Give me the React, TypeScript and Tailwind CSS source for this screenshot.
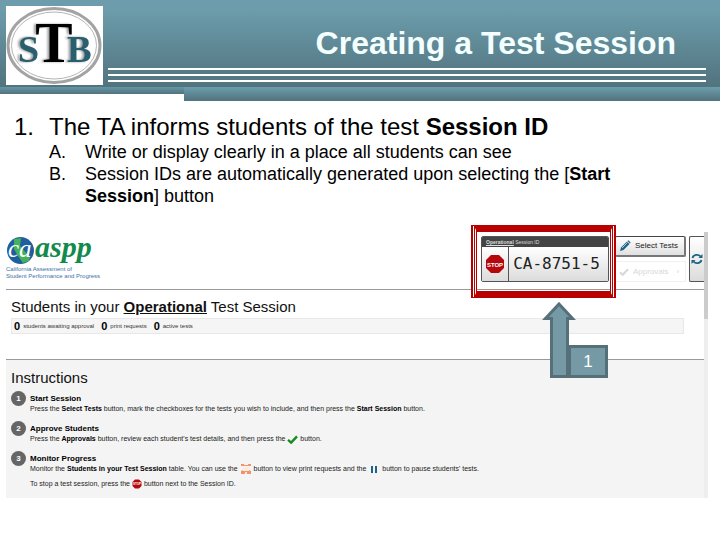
import type { ReactNode } from "react";

function StbLogo() {
  return (
    <svg viewBox="0 0 97 79" className="block h-[79px] w-[97px] bg-white" role="img" aria-label="STB">
      <ellipse cx="48" cy="39.500" rx="46" ry="37" fill="#fff" stroke="#a3a3a3" strokeWidth="3" />
      <ellipse cx="48" cy="39.500" rx="42.500" ry="33.500" fill="none" stroke="#b5b5b5" strokeWidth="1" />
      <g className="drop-shadow-[-2px_0_1px_#999]" fontFamily="'Liberation Serif', serif" fontWeight="bold">
        <text x="12" y="56" fontSize="38" fill="#28606f">S</text>
        <text x="61" y="56" fontSize="37" fill="#28606f">B</text>
        <text x="48" y="56" fontSize="56" textAnchor="middle" fill="#000">T</text>
      </g>
    </svg>
  );
}

function CaasppLogo() {
  return (
    <svg viewBox="0 0 90 44" className="block h-[44px] w-[90px] overflow-visible" role="img" aria-label="caaspp">
      <circle cx="14.500" cy="14.500" r="13.500" fill="#1f5fa0" />
      <path d="M8 3 L15 2 L14 10 L24 21 L23 25 L17 27 L12 20 L8 13 Z" fill="#45b15a" />
      <g fontFamily="'Liberation Serif', serif" fontStyle="italic">
        <text x="2" y="21" fontSize="25" fill="#fff">ca</text>
        <text x="29" y="21" fontSize="30" fill="#128a4c" fontWeight="bold">aspp</text>
      </g>
      <g fontFamily="'Liberation Sans', sans-serif" fontSize="6" fill="#3b73a8">
        <text x="0" y="35">California Assessment of</text>
        <text x="0" y="42">Student Performance and Progress</text>
      </g>
    </svg>
  );
}

function StopIcon({ className }: { className: string }) {
  return (
    <svg viewBox="0 0 20 20" className={className} role="img" aria-label="Stop">
      <path d="M6 1h8l5 5v8l-5 5H6l-5-5V6z" fill="#b5080c" />
      <text x="10" y="12.500" textAnchor="middle" fontFamily="'Liberation Sans', sans-serif" fontWeight="bold" fontSize="6" fill="#fff">STOP</text>
    </svg>
  );
}

function PencilIcon() {
  return (
    <svg viewBox="0 0 12 12" className="h-3 w-3 shrink-0" aria-hidden="true">
      <path d="M1 11 L2 7.500 L8 1.500 L10.500 4 L4.500 10 Z" fill="#1d6483" />
      <path d="M3 8 L8.500 2.500" stroke="#a8cfdf" strokeWidth="1" />
      <path d="M8.500 1 L9.500 0.300 L11.600 2.400 L11 3.500Z" fill="#1d6483" />
    </svg>
  );
}

function RefreshIcon() {
  return (
    <svg viewBox="0 0 12 12" className="h-3 w-3 shrink-0" fill="none" stroke="#1d6483" strokeWidth="1.800" aria-hidden="true">
      <path d="M1.500 5 A4.500 4 0 0 1 9.500 3.500" />
      <path d="M10.500 7 A4.500 4 0 0 1 2.500 8.500" />
      <path d="M11.500 1 V5 H7.500 Z M0.500 11 V7 H4.500 Z" fill="#1d6483" stroke="none" />
    </svg>
  );
}

function CheckIcon({ className }: { className: string }) {
  return (
    <svg viewBox="0 0 12 10" className={className} aria-hidden="true">
      <path d="M1 5.500 L4.500 8.500 L11 1.500" fill="none" stroke="currentColor" strokeWidth="2.600" />
    </svg>
  );
}

function PrintIcon() {
  return (
    <svg viewBox="0 0 10 10" className="mx-px inline-block h-[10px] w-[10px] align-middle" role="img" aria-label="print">
      <path d="M0 0h3v2H0z M7 0h3v2H7z M3 1h4v1H3z M0 7l2-1h6l2 1v3H0z" fill="#f0946a" />
      <path d="M2 3h6v4H2z M4 8h2v2H4z" fill="#fde9df" />
    </svg>
  );
}

function PauseIcon() {
  return (
    <svg viewBox="0 0 6 7" className="mx-[3px] inline-block h-[7px] w-[6px] align-middle" role="img" aria-label="pause">
      <path d="M0 0h2v7H0z M4 0h2v7H4z" fill="#1d6483" />
    </svg>
  );
}

function Step({ n, title, children }: { n: number; title: string; children: ReactNode }) {
  return (
    <li className="flex min-h-[30px] gap-1">
      <span className="flex h-[15px] w-[15px] shrink-0 items-center justify-center rounded-full bg-[#666] text-[8px] font-bold text-white">{n}</span>
      <div className="pt-[3px]">
        <h3 className="text-[8px] leading-[10px] font-bold text-black">{title}</h3>
        {children}
      </div>
    </li>
  );
}

function Callout() {
  return (
    <div className="absolute top-[70px] right-[96px] flex items-end">
      <svg viewBox="0 0 34 76" className="-mr-2 h-[76px] w-[34px]" aria-hidden="true">
        <path d="M17 2 L30.500 16.500 H25.500 V74.500 H9.500 V16.500 H3.500 Z" fill="#759aa6" stroke="#557079" strokeWidth="3" />
      </svg>
      <div className="flex h-[33px] w-[40px] items-center justify-center border-3 border-[#557079] bg-[#759aa6] text-[17px] text-white">1</div>
    </div>
  );
}

function SessionBox() {
  return (
    <div className="relative w-[128px] self-start">
      <div className="overflow-hidden rounded-xs border border-[#555]">
        <div className="h-[10px] bg-[#444] pl-1 text-[5px] leading-[10px] text-[#ddd]">
          <b className="underline">Operational</b> Session ID
        </div>
        <div className="flex h-[34px] bg-linear-to-b from-white to-[#dcdcdc]">
          <button type="button" aria-label="Stop session" className="flex w-[27px] items-center justify-center border-r border-[#555]">
            <StopIcon className="h-5 w-5" />
          </button>
          <output className="flex flex-1 items-center justify-center pr-1 font-['DejaVu_Sans_Mono',monospace] text-[16px] text-[#222]">CA-8751-5</output>
        </div>
      </div>
      <div className="absolute -top-[11px] -right-[7px] -bottom-[16px] -left-[10px] flex border-x-2 border-y-1 border-[#b80000]">
        <div className="flex-1 border-x border-y-0 border-white">
          <div className="h-full border-x border-y-2 border-[#b80000]">
            <div className="h-full border-x border-x-white border-y-2 border-y-[#b80000]">
              <div className="h-full border-x border-y-2 border-[#b80000]" />
            </div>
          </div>
        </div>
      </div>
    </div>
  );
}

export default function App() {
  return (
    <main className="bg-white font-['Liberation_Sans',Arial,sans-serif] text-black">
      <header>
        <div className="flex h-[87px] gap-[5px] bg-linear-to-b from-[#6d9dac] from-10% to-[#51737e] pt-[6px] pl-[6px]">
          <StbLogo />
          <div className="flex flex-1 flex-col">
            <h1 className="h-[62px] pt-[19px] pr-[44px] text-right text-[32px] leading-[36px] font-bold text-[#f4ffff]">Creating a Test Session</h1>
            <div className="mr-[14px] flex flex-col gap-1">
              <div className="h-[2px] bg-white" />
              <div className="h-[2px] bg-white" />
              <div className="h-[2px] bg-white" />
            </div>
          </div>
        </div>
        <div className="flex">
          <div className="h-[7px] w-[184px] bg-linear-to-b from-[#6596a4] to-[#51737e]" />
          <div className="h-[14px] flex-1 bg-linear-to-b from-[#6d9dac] to-[#51737e]" />
        </div>
      </header>

      <ol className="pt-[12px]">
        <li>
          <div className="flex text-[24px] leading-[28px]">
            <span className="w-[49px] pl-[14px]">1.</span>
            <p>The TA informs students of the test <b>Session ID</b></p>
          </div>
          <ol className="pl-[49px] text-[18px] leading-[22px]">
            <li className="flex">
              <span className="w-[36px] shrink-0">A.</span>
              <p>Write or display clearly in a place all students can see</p>
            </li>
            <li className="flex">
              <span className="w-[36px] shrink-0">B.</span>
              <p className="max-w-[550px]">Session IDs are automatically generated upon selecting the [<b>Start Session</b>] button</p>
            </li>
          </ol>
        </li>
      </ol>

      <section className="mt-[25px] mr-[12px] ml-[6px] flex">
        <div className="min-w-0 flex-1">
          <div className="relative flex h-[58px] justify-between border-b border-[#999] pt-[4px]">
            <CaasppLogo />
            <div className="flex">
              <SessionBox />
              <div className="mr-[3px] ml-[6px] flex w-[71px] flex-col gap-[4px]">
                <button type="button" className="flex h-[21px] items-center gap-[4px] rounded-xs border border-r-2 border-b-2 border-[#777] border-t-[#444] bg-linear-to-b from-white to-[#e0e0e0] pl-[3px] text-[8px] whitespace-nowrap text-[#222]">
                  <PencilIcon />Select Tests
                </button>
                <button type="button" disabled className="flex h-[21px] items-center gap-[4px] border border-[#f1f1f1] pl-[3px] text-[8px] text-[#d8d8d8]">
                  <CheckIcon className="h-2 w-[10px]" />Approvals<span className="ml-1">›</span>
                </button>
              </div>
              <button type="button" aria-label="Refresh" className="flex h-[46px] w-[15px] items-center justify-center rounded-l-xs border border-r-0 border-[#555] bg-linear-to-b from-white to-[#dcdcdc]">
                <RefreshIcon />
              </button>
            </div>
            <Callout />
          </div>
          <div className="h-[69px] pt-[7px] pl-[5px]">
            <h2 className="text-[15px] leading-[20px] text-[#111]">Students in your <b className="underline">Operational</b> Test Session</h2>
            <div className="mt-px mr-[20px] flex h-[16px] items-center gap-[7px] border border-[#e8e8e8] bg-[#f5f5f5] pl-[2px] text-[6px] text-[#333]">
              <span className="flex items-center gap-[3px]"><b className="text-[11px] text-black">0</b>students awaiting approval</span>
              <span className="flex items-center gap-[3px]"><b className="text-[11px] text-black">0</b>print requests</span>
              <span className="flex items-center gap-[3px]"><b className="text-[11px] text-black">0</b>active tests</span>
            </div>
          </div>
          <div className="h-[139px] border-t border-[#999] bg-[#f4f4f4] pt-[8px] pl-[5px]">
            <h2 className="text-[15px] leading-[20px] text-[#111]">Instructions</h2>
            <ol className="pt-[3px] text-[7px] leading-[10px] text-[#222]">
              <Step n={1} title="Start Session">
                <p>Press the <b className="text-black">Select Tests</b> button, mark the checkboxes for the tests you wish to include, and then press the <b className="text-black">Start Session</b> button.</p>
              </Step>
              <Step n={2} title="Approve Students">
                <p>Press the <b className="text-black">Approvals</b> button, review each student&apos;s test details, and then press the <CheckIcon className="inline-block h-[9px] w-[11px] align-middle text-[#178a1c]" /> button.</p>
              </Step>
              <Step n={3} title="Monitor Progress">
                <p className="h-[15px]">Monitor the <b className="text-black">Students in your Test Session</b> table. You can use the <PrintIcon /> button to view print requests and the <PauseIcon /> button to pause students&apos; tests.</p>
                <p>To stop a test session, press the <StopIcon className="inline-block h-[10px] w-[10px] align-middle" /> button next to the Session ID.</p>
              </Step>
            </ol>
          </div>
        </div>
        <div className="w-1 bg-[#eee]">
          <div className="h-[87px] bg-[#ccc]" />
        </div>
      </section>
    </main>
  );
}
